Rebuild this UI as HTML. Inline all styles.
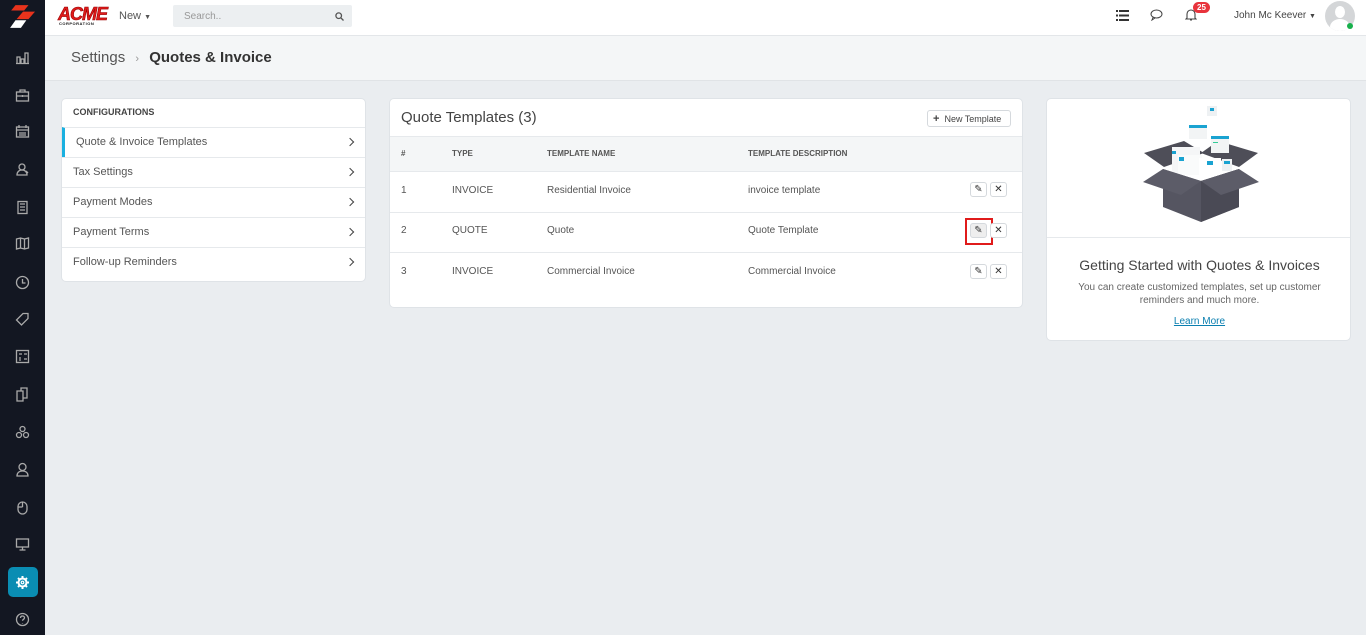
<!DOCTYPE html>
<html><head><meta charset="utf-8"><style>
*{box-sizing:border-box;margin:0;padding:0}
body{width:1366px;height:635px;overflow:hidden;font-family:"Liberation Sans",sans-serif;background:#eaedf0;position:relative;color:#555}
.side{position:absolute;left:0;top:0;width:45px;height:635px;background:#131722}
.side svg{position:absolute;left:15px;width:15px;height:15px}
.top{position:absolute;left:45px;top:0;right:0;height:36px;background:#fff;border-bottom:1px solid #e3e6e9}
.crumb{position:absolute;left:45px;top:36px;right:0;height:45px;background:#f4f6f7;border-bottom:1px solid #e0e3e6}
.card{position:absolute;background:#fff;border-radius:5px;border:1px solid #dfe3e7}
.abs{position:absolute}
.row{position:absolute;left:0;right:0;height:30px;border-top:1px solid #e6e9ec;font-size:11px;color:#555;padding-left:11px;line-height:29px}
.chev{position:absolute;right:12px;top:11px;width:6px;height:6px;border-right:1.2px solid #444;border-top:1.2px solid #444;transform:rotate(45deg)}
.th{position:absolute;font-size:8px;font-weight:bold;color:#555;top:50px}
.td{position:absolute;font-size:10px;color:#555}
.btn{position:absolute;width:17px;height:15px;border:1px solid #d5d9dd;border-radius:3px;background:#fff;font-size:10px;text-align:center;line-height:13px;color:#333}
</style></head><body>
<div class="side">
<svg style="top:5px;left:9px;width:26px;height:24px" viewBox="0 0 24 22"><polygon points="6,0 18,0 14,5 2,5" fill="#e8331c"/><polygon points="13,6 24,6 18,13 7,13" fill="#e8331c"/><polygon points="6,14 16,14 11,21 1,21" fill="#fff"/></svg>
<svg style="top:50px" viewBox="0 0 15 15" fill="none" stroke="#aaa" stroke-width="1.3"><path d="M2 13V7h3v6M6 13V9h3v4M10 13V3h3v10M1 13.5h13"/></svg>
<svg style="top:88px" viewBox="0 0 15 15" fill="none" stroke="#aaa" stroke-width="1.3"><rect x="1.5" y="4" width="12" height="9"/><path d="M5 4V2h5v2M1.5 8h12M7.5 7v2"/></svg>
<svg style="top:124px" viewBox="0 0 15 15" fill="none" stroke="#aaa" stroke-width="1.3"><rect x="1.5" y="3" width="12" height="10"/><path d="M4 1v3M11 1v3M1.5 6h12M4 9h7M4 11h7"/></svg>
<svg style="top:162px" viewBox="0 0 15 15" fill="none" stroke="#aaa" stroke-width="1.3"><circle cx="7" cy="5" r="3"/><path d="M2 13c0-3 2-5 5-5s5 2 5 5zM11 9l2 2"/></svg>
<svg style="top:200px" viewBox="0 0 15 15" fill="none" stroke="#aaa" stroke-width="1.3"><rect x="3" y="1.5" width="9" height="12"/><path d="M5 4h5M5 7h5M5 10h5"/></svg>
<svg style="top:236px" viewBox="0 0 15 15" fill="none" stroke="#aaa" stroke-width="1.3"><path d="M1.5 3l4-1 4 1 4-1v10l-4 1-4-1-4 1zM5.5 2v10M9.5 3v10"/></svg>
<svg style="top:275px" viewBox="0 0 15 15" fill="none" stroke="#aaa" stroke-width="1.3"><circle cx="7.5" cy="7.5" r="6"/><path d="M7.5 4v4h3"/></svg>
<svg style="top:312px" viewBox="0 0 15 15" fill="none" stroke="#aaa" stroke-width="1.3"><path d="M8 1.5h5v5l-6.5 6.5-5-5zM10.5 4.5h.1"/></svg>
<svg style="top:349px" viewBox="0 0 15 15" fill="none" stroke="#aaa" stroke-width="1.3"><rect x="1.5" y="1.5" width="12" height="12"/><path d="M4 5h3M9 5h3M4 9h2M4 11h2M9 10h3"/></svg>
<svg style="top:387px" viewBox="0 0 15 15" fill="none" stroke="#aaa" stroke-width="1.3"><path d="M2 4h6v10H2zM6 4V1h6v10H8"/></svg>
<svg style="top:425px" viewBox="0 0 15 15" fill="none" stroke="#aaa" stroke-width="1.3"><circle cx="7.5" cy="4" r="2.5"/><circle cx="4" cy="10" r="2.5"/><circle cx="11" cy="10" r="2.5"/></svg>
<svg style="top:462px" viewBox="0 0 15 15" fill="none" stroke="#aaa" stroke-width="1.3"><circle cx="7.5" cy="5" r="3.5"/><path d="M2 14c0-3 2-5 5.5-5s5.5 2 5.5 5z"/></svg>
<svg style="top:500px" viewBox="0 0 15 15" fill="none" stroke="#aaa" stroke-width="1.3"><rect x="3" y="2" width="9" height="12" rx="4.5"/><path d="M7.5 2v5M3 7h4.5"/></svg>
<svg style="top:537px" viewBox="0 0 15 15" fill="none" stroke="#aaa" stroke-width="1.3"><rect x="1.5" y="2" width="12" height="8"/><path d="M7.5 10v3M4.5 13h6"/></svg>
<div class="abs" style="left:8px;top:567px;width:30px;height:30px;background:#0a8db3;border-radius:5px"></div>
<svg style="top:575px" viewBox="0 0 15 15" fill="none" stroke="#fff" stroke-width="2"><circle cx="7.5" cy="7.5" r="4"/><circle cx="7.5" cy="7.5" r="1.3" stroke-width="1.2"/><path d="M7.5 1v2M7.5 12v2M1 7.5h2M12 7.5h2M3 3l1.4 1.4M10.6 10.6L12 12M3 12l1.4-1.4M10.6 4.4L12 3"/></svg>
<svg style="top:612px" viewBox="0 0 15 15" fill="none" stroke="#aaa" stroke-width="1.3"><circle cx="7.5" cy="7.5" r="6"/><path d="M5.5 6c0-1.5 1-2 2-2s2 .6 2 1.8c0 1.5-2 1.5-2 3M7.5 11v.5"/></svg>
</div>
<div class="top">
<div class="abs" style="left:13px;top:4px;font:italic bold 18px 'Liberation Sans',sans-serif;color:#e01b1b;letter-spacing:-1px;-webkit-text-stroke:0.6px #900">ACME</div>
<div class="abs" style="left:14px;top:21px;font:bold 4px 'Liberation Sans',sans-serif;color:#111;letter-spacing:.5px">CORPORATION</div>
<div class="abs" style="left:74px;top:10px;font-size:11px;color:#555">New <span style="font-size:7px">▼</span></div>
<div class="abs" style="left:128px;top:5px;width:179px;height:22px;background:#eceff1;border-radius:2px;font-size:10px;color:#999;padding:6px 11px">Search..</div>
<svg class="abs" style="left:290px;top:12px" width="9" height="9" viewBox="0 0 9 9" fill="none" stroke="#555" stroke-width="1.3"><circle cx="3.7" cy="3.7" r="2.8"/><path d="M6 6l2.5 2.5"/></svg>
<svg class="abs" style="left:1071px;top:10px" width="13" height="11" viewBox="0 0 13 11" fill="#333"><rect x="0" y="0" width="2" height="2"/><rect x="3" y="0" width="10" height="2"/><rect x="0" y="4.5" width="2" height="2"/><rect x="3" y="4.5" width="10" height="2"/><rect x="0" y="9" width="2" height="2"/><rect x="3" y="9" width="10" height="2"/></svg>
<svg class="abs" style="left:1105px;top:9px" width="13" height="12" viewBox="0 0 13 12" fill="none" stroke="#444" stroke-width="1"><ellipse cx="6.5" cy="5" rx="5.5" ry="4"/><path d="M3 8.5L2 11l3-2"/></svg>
<svg class="abs" style="left:1140px;top:8px" width="12" height="13" viewBox="0 0 12 13" fill="none" stroke="#444" stroke-width="1.1"><path d="M2 10V6a4 4 0 018 0v4l1 1H1zM5 12h2"/></svg>
<div class="abs" style="left:1148px;top:2px;background:#e8333c;color:#fff;font-size:8px;font-weight:bold;border-radius:7px;padding:1px 4px;line-height:9px">25</div>
<div class="abs" style="left:1189px;top:10px;font-size:10px;color:#444">John Mc Keever <span style="font-size:7px">▼</span></div>
<div class="abs" style="left:1280px;top:1px;width:30px;height:30px;border-radius:50%;background:#d4d6d8;overflow:hidden"><div class="abs" style="left:10px;top:5px;width:10px;height:12px;border-radius:50%;background:#fff"></div><div class="abs" style="left:5px;top:18px;width:20px;height:16px;border-radius:50%;background:#fff"></div></div>
<div class="abs" style="left:1302px;top:23px;width:6px;height:6px;border-radius:50%;background:#18b04c"></div>
</div>
<div class="crumb">
<div class="abs" style="left:26px;top:13px;font-size:15px;color:#555">Settings <span style="font-size:11px;color:#999;margin:0 6px">›</span> <b style="color:#333">Quotes &amp; Invoice</b></div>
</div>
<div class="card" style="left:61px;top:98px;width:305px;height:184px">
<div class="abs" style="left:11px;top:8px;font-size:9px;font-weight:bold;color:#444">CONFIGURATIONS</div>
<div class="row" style="top:28px;border-left:3px solid #1ab0e0;padding-left:11px">Quote &amp; Invoice Templates<span class="chev"></span></div>
<div class="row" style="top:58px">Tax Settings<span class="chev"></span></div>
<div class="row" style="top:88px">Payment Modes<span class="chev"></span></div>
<div class="row" style="top:118px">Payment Terms<span class="chev"></span></div>
<div class="row" style="top:148px">Follow-up Reminders<span class="chev"></span></div>
</div>
<div class="card" style="left:389px;top:98px;width:634px;height:210px">
<div class="abs" style="left:11px;top:10px;font-size:15px;color:#444">Quote Templates (3)</div>
<div class="abs" style="left:537px;top:11px;width:84px;height:17px;border:1px solid #d5d9dd;border-radius:3px;font-size:9px;color:#444;padding:3px 0 0 5px"><b style="font-size:11px;line-height:9px">+</b>&nbsp; New Template</div>
<div class="abs" style="left:0;right:0;top:37px;height:36px;background:#f4f6f7;border-top:1px solid #e6e9ec;border-bottom:1px solid #e6e9ec"></div>
<div class="th" style="left:11px">#</div><div class="th" style="left:62px">TYPE</div><div class="th" style="left:157px">TEMPLATE NAME</div><div class="th" style="left:358px">TEMPLATE DESCRIPTION</div>
<div class="abs" style="left:0;right:0;top:113px;border-top:1px solid #e6e9ec"></div>
<div class="abs" style="left:0;right:0;top:153px;border-top:1px solid #e6e9ec"></div>
<div class="td" style="left:11px;top:86px">1</div><div class="td" style="left:62px;top:86px">INVOICE</div><div class="td" style="left:157px;top:86px">Residential Invoice</div><div class="td" style="left:358px;top:86px">invoice template</div>
<div class="td" style="left:11px;top:126px">2</div><div class="td" style="left:62px;top:126px">QUOTE</div><div class="td" style="left:157px;top:126px">Quote</div><div class="td" style="left:358px;top:126px">Quote Template</div>
<div class="td" style="left:11px;top:167px">3</div><div class="td" style="left:62px;top:167px">INVOICE</div><div class="td" style="left:157px;top:167px">Commercial Invoice</div><div class="td" style="left:358px;top:167px">Commercial Invoice</div>
<div class="btn" style="left:580px;top:83px">✎</div><div class="btn" style="left:600px;top:83px">✕</div>
<div class="abs" style="left:575px;top:119px;width:28px;height:27px;border:2px solid #e01b1b"></div>
<div class="btn" style="left:580px;top:124px;background:#eee">✎</div><div class="btn" style="left:600px;top:124px">✕</div>
<div class="btn" style="left:580px;top:165px">✎</div><div class="btn" style="left:600px;top:165px">✕</div>
</div>
<div class="card" style="left:1046px;top:98px;width:305px;height:243px">
<div class="abs" style="left:0;right:0;top:138px;border-top:1px solid #e6e9ec"></div>
<svg class="abs" style="left:94px;top:2px" width="120" height="125" viewBox="0 0 120 125">
<rect x="66" y="5" width="10" height="10" fill="#eef1f3"/><rect x="69" y="7" width="4" height="3" fill="#1aa3d1"/>
<path d="M3 52l40-12 20 12-40 14z" fill="#4e4e58"/><path d="M117 52l-40-12-17 12 38 14z" fill="#4e4e58"/>
<rect x="48" y="24" width="18" height="14" fill="#f2f4f5"/><rect x="48" y="24" width="18" height="3" fill="#1aa3d1"/>
<rect x="70" y="35" width="18" height="17" fill="#f2f4f5"/><rect x="70" y="35" width="18" height="3" fill="#1aa3d1"/><rect x="72" y="41" width="5" height="1" fill="#3c9"/>
<rect x="31" y="46" width="28" height="28" fill="#f5f6f7"/><rect x="31" y="50" width="4" height="3" fill="#1aa3d1"/>
<rect x="37" y="54" width="24" height="20" fill="#fafbfb"/><rect x="38" y="56" width="5" height="4" fill="#1aa3d1"/>
<rect x="58" y="57" width="22" height="18" fill="#fff"/><rect x="66" y="60" width="6" height="4" fill="#1aa3d1"/>
<rect x="81" y="58" width="10" height="12" fill="#eef1f3"/><rect x="83" y="60" width="6" height="3" fill="#1aa3d1"/>
<path d="M22 68l38 12 38-12v38l-38 15-38-15z" fill="#555561"/><path d="M60 80l38-12v38l-38 15z" fill="#4a4a55"/>
<path d="M22 68L2 81l38 13 20-14z" fill="#5c5c68"/><path d="M98 68l20 13-38 13-20-14z" fill="#5c5c68"/>
</svg>
<div class="abs" style="left:0;width:305px;top:158px;text-align:center;font-size:14px;color:#444">Getting Started with Quotes &amp; Invoices</div>
<div class="abs" style="left:15px;width:275px;top:182px;text-align:center;font-size:10px;color:#666;line-height:13px">You can create customized templates, set up customer reminders and much more.</div>
<div class="abs" style="left:0;width:305px;top:217px;text-align:center;font-size:10px;color:#0a7fb0;text-decoration:underline">Learn More</div>
</div>
</body></html>
